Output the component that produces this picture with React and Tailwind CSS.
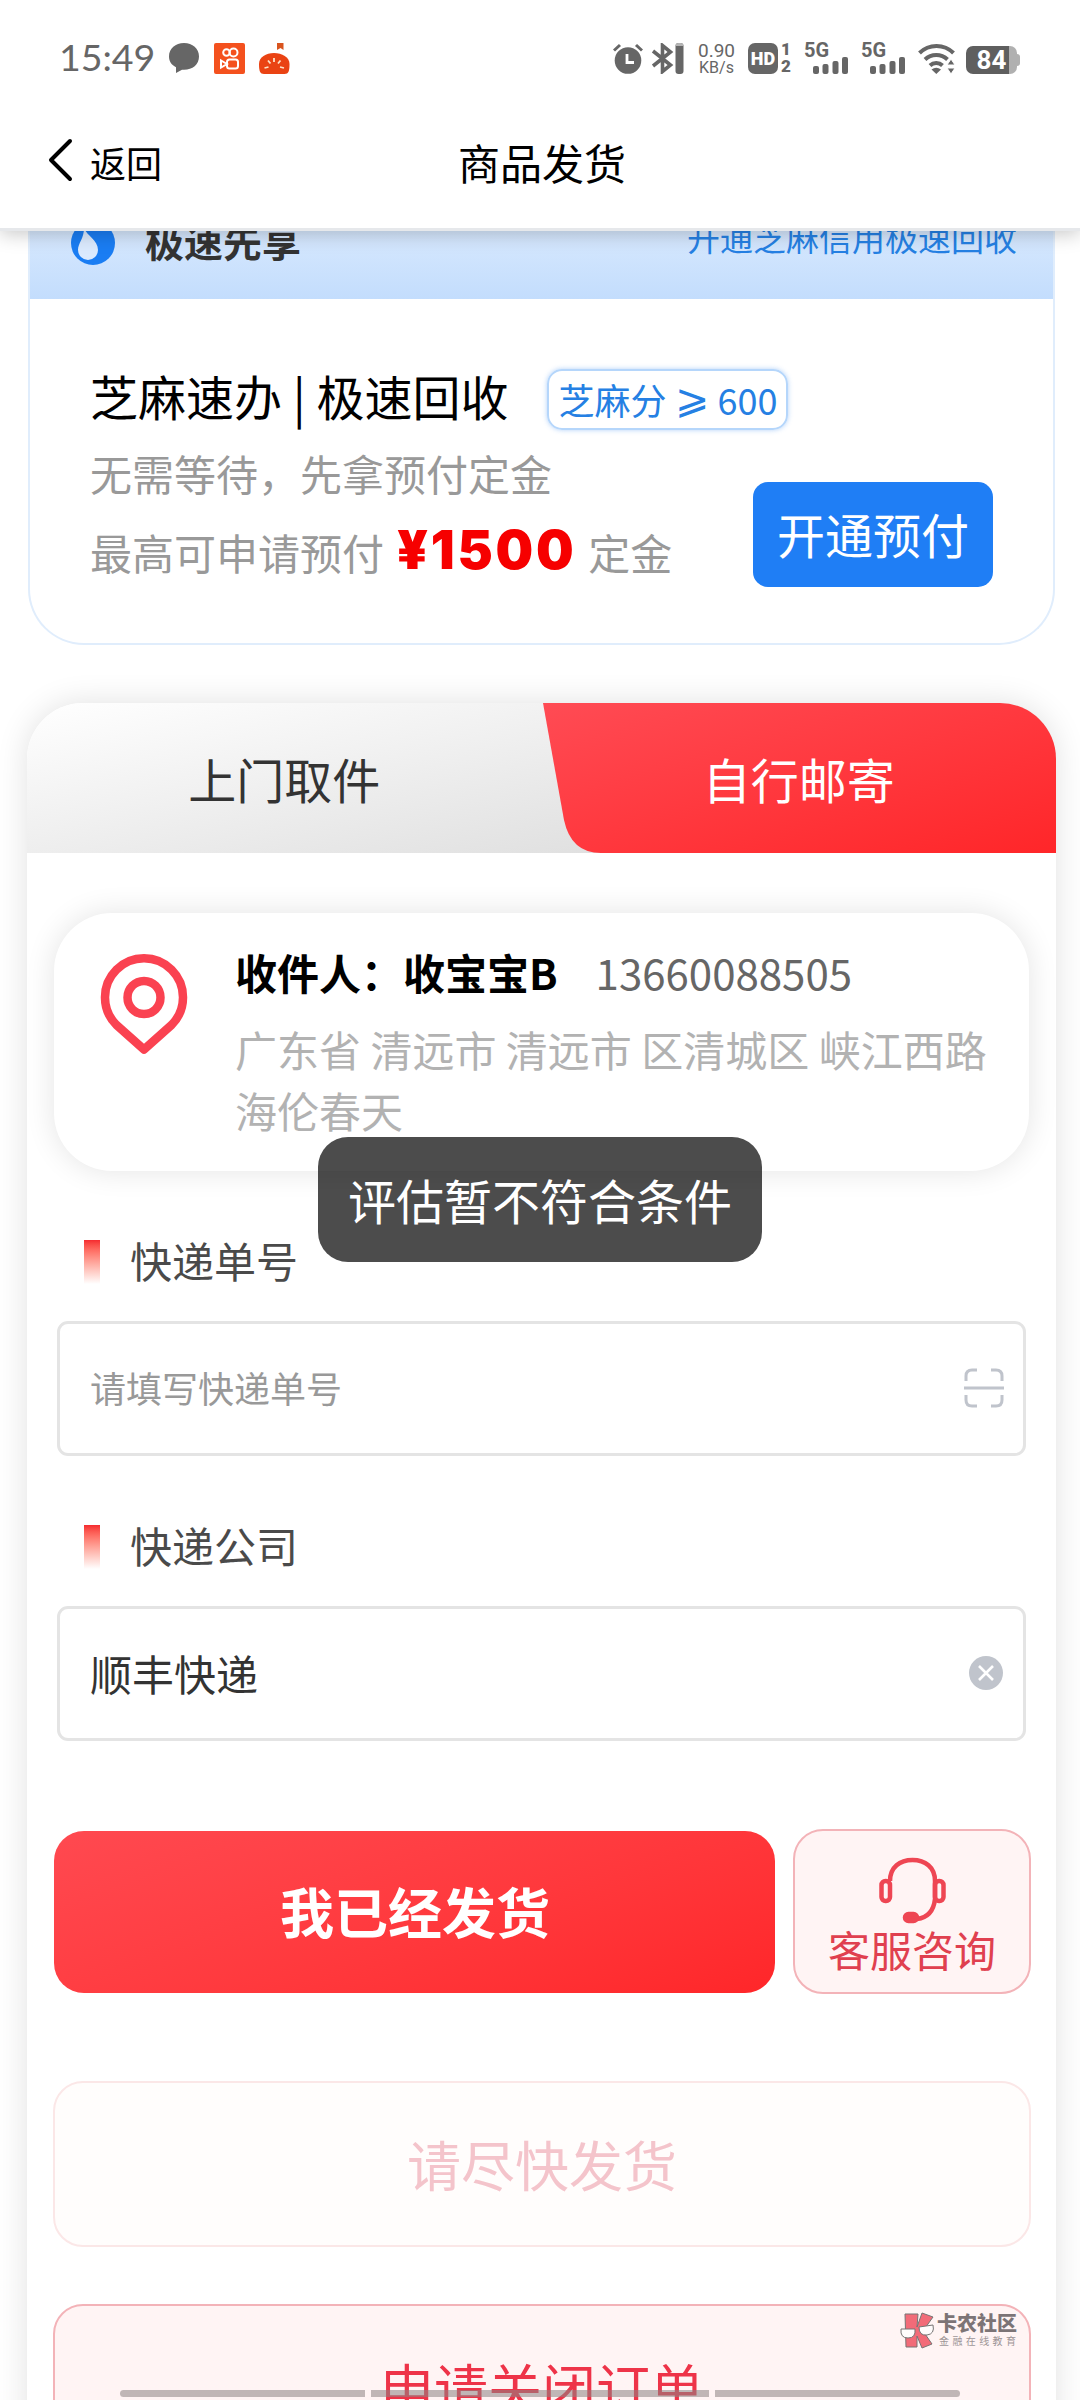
import React, { useState } from 'react';

function StatusBar() {
  return (
    <div className="flex h-[115px] items-start pt-[43px] pr-[60px] pl-[59px] text-[#666]">
      <span className="-mt-[1px] w-[110px] font-['Lato'] text-[37.500px] leading-[30px] whitespace-nowrap">15:49</span>
      <svg className="h-[30px] w-[30px]" viewBox="0 0 30 30">
        <path d="M15 0C6.500 0 0 5.500 0 13.500c0 5 2.700 8.500 7 10.700V30l6-3.200h2c8.500 0 15-5.300 15-13.300S23.500 0 15 0z" fill="currentColor" />
      </svg>
      <svg className="ml-[15px] h-[31px] w-[31px]" viewBox="0 0 31 31">
        <rect width="31" height="31" rx="2" fill="#f4511e" />
        <g fill="none" stroke="#fff" strokeWidth="2">
          <circle cx="12.500" cy="9.500" r="3.300" />
          <circle cx="19.500" cy="9.500" r="4" />
          <rect x="13" y="16.500" width="11" height="9" rx="2.500" />
          <path d="M13 21l-6-3.500v7z" />
        </g>
      </svg>
      <svg className="ml-[14px] h-[31px] w-[31px]" viewBox="0 0 31 31">
        <path d="M18 0h6.500v7l-3-2-3.500 2z" fill="#d9541e" />
        <path d="M0 21C0 14 7 10 15 10s15.500 4 15.500 11c0 7-1 10-5 10H5c-4 0-5-3-5-10z" fill="#ea4313" />
        <path d="M15 15v4M9 17.500l2.500 3M21.500 17.500l-2.500 3M5.500 25l4-1M25 25l-4-1" stroke="#fde3c8" strokeWidth="1.800" />
      </svg>

      <div className="ml-auto flex">
        <svg className="h-[31px] w-[30px]" viewBox="0 0 30 31">
          <circle cx="15" cy="17.500" r="13.300" fill="currentColor" />
          <path d="M1 7.500L7 2M29 7.500L23 2" stroke="currentColor" strokeWidth="3" />
          <path d="M14 11v8.500h7" fill="none" stroke="#fff" strokeWidth="2.800" />
        </svg>
        <svg className="ml-[8px] h-[31px] w-[33px]" viewBox="0 0 33 31">
          <path d="M2 8l17.500 14-8 6.500V2.500l8 6.500L2 23" fill="none" stroke="currentColor" strokeWidth="3.600" />
          <rect x="24.500" y="0" width="8" height="31" rx="3" fill="currentColor" />
          <path d="M24.500 3a3 3 0 0 1 3-3h2a3 3 0 0 1 3 3z" fill="#b5b5b5" />
        </svg>
        <div className="ml-[13px] flex w-[39px] flex-col items-center font-['Roboto'] whitespace-nowrap">
          <span className="text-[19px] leading-[15px]">0.90</span>
          <span className="text-[16px] leading-[19px]">KB/s</span>
        </div>
        <div className="ml-[12px] flex h-[31px] w-[30px] items-center justify-center rounded-[7px] bg-[#666] font-['Roboto'] text-[18px] font-black text-white">HD</div>
        <div className="ml-[2px] flex w-[12px] flex-col items-center font-['Roboto'] text-[17px] leading-[17px] font-black">
          <span className="-mt-[2px]">1</span>
          <span>2</span>
        </div>
        <Signal />
        <Signal />
        <svg className="ml-[12px] h-[31px] w-[37px]" viewBox="0 0 37 31">
          <g fill="none" stroke="currentColor" strokeWidth="4">
            <path d="M1.500 10a24 24 0 0 1 34 0" />
            <path d="M7 16.500a16.500 16.500 0 0 1 22.500 0" />
            <path d="M12 22.500a9 9 0 0 1 12.500 0" />
          </g>
          <path d="M13.500 26.500q4.700-3.500 9.500 0l-4.700 4.500z" fill="currentColor" />
          <path d="M33 16l4 6h-8zM33 31l4-6h-8z" fill="currentColor" stroke="#fff" />
        </svg>
        <div className="mt-[3px] ml-[11px] flex h-[28px] items-center">
          <div className="flex h-[28px] w-[51px] items-center justify-center rounded-[7px] bg-linear-to-r from-[#5f5f5f] from-84% to-[#b0b0b0] to-84% font-['Roboto'] text-[26px] font-bold text-white">84</div>
          <div className="h-[12px] w-[3px] rounded-r bg-[#b0b0b0]" />
        </div>
      </div>
    </div>
  );
}

function Signal() {
  return (
    <div className="ml-[12px] flex h-[31px] w-[45px] flex-col">
      <span className="h-[14px] font-['Roboto'] text-[20px] leading-[15px] font-bold">5G</span>
      <svg className="ml-[9px] h-[17px] w-[36px]" viewBox="0 0 36 17" fill="currentColor">
        <rect x="0" y="9" width="6" height="8" rx="2" />
        <rect x="9.500" y="7" width="6" height="10" rx="2" />
        <rect x="19.500" y="4" width="6" height="13" rx="2" />
        <rect x="29" y="0" width="6" height="17" rx="2" />
      </svg>
    </div>
  );
}

function Header() {
  return (
    <header className="relative z-10 h-[231px] border-b-[3px] border-[#e6e8eb] bg-white shadow-[0_3px_18px_rgba(0,0,0,0.22)]">
      <StatusBar />
      <div className="grid grid-cols-3 items-center pt-[14px]">
        <button className="flex items-center pl-[47px] text-left text-[36px] leading-[60px]">
          <svg className="-mt-[4px] h-[44px] w-[26px]" viewBox="0 0 26 44" fill="none" stroke="#000" strokeWidth="4" strokeLinecap="round" strokeLinejoin="round">
            <path d="M23 3L4 22L23 41" />
          </svg>
          <span className="ml-[17px]">返回</span>
        </button>
        <h1 className="pl-[4px] text-center text-[42px] leading-[66px]">商品发货</h1>
      </div>
    </header>
  );
}

function PrepayCard() {
  return (
    <section className="mr-[25px] ml-[28px] -mt-[44px] h-[458px] overflow-hidden rounded-b-[56px] border-2 border-t-0 border-[#e0edfc]">
      <div className="flex h-[112px] items-center bg-linear-to-b from-[#e3effe] to-[#c3ddfd] pr-[36px] pl-[41px]">
        <svg className="h-[44px] w-[44px]" viewBox="0 0 44 44">
          <circle cx="22" cy="22" r="22" fill="#1a7df3" />
          <path d="M13 7c3 8 14 12 14 22a10 10 0 0 1-20 0c0-7 6-11 6-22z" fill="#dbeafe" />
        </svg>
        <span className="mb-[5px] ml-[30px] text-[39px] leading-none font-bold text-[#333]">极速先享</span>
        <span className="mb-[12px] ml-auto text-[33px] leading-none text-[#2580e3]">开通芝麻信用极速回收</span>
      </div>
      <div className="flex px-[60px] pt-[63px]">
        <div className="flex-1 whitespace-nowrap">
          <div className="flex h-[75px] items-center">
            <h2 className="-mt-[9px] text-[48px] leading-[75px] text-black">芝麻速办 | 极速回收</h2>
            <span className="ml-[39px] flex h-[61px] items-center rounded-[15px] border-2 border-[#b5d6fb] px-[9px] pb-[2px] text-[36px] leading-none text-[#2580e3] shadow-[0_0_5px_rgba(60,140,240,0.4)]">
              芝麻分
              <span className="mr-[8px] mb-[8px] ml-[9px] text-[41px] leading-[36px]">⩾</span>
              600
            </span>
          </div>
          <p className="-mt-[2px] text-[42px] leading-[76px] text-[#999]">无需等待，先拿预付定金</p>
          <p className="flex h-[80px] items-center text-[42px] text-[#999]">
            最高可申请预付
            <b className="mr-[12px] ml-[13px] font-['Inter'] text-[53px] font-black tracking-[2.700px] text-[#f60000]">¥1500</b>
            定金
          </p>
        </div>
        <button className="mt-[120px] -ml-[240px] h-[105px] w-[240px] rounded-[15px] bg-[#1f7ef5] pb-[3px] text-[48px] text-white">开通预付</button>
      </div>
    </section>
  );
}

function Tabs({ active, onChange }) {
  return (
    <div className="relative grid h-[150px] grid-cols-2 overflow-hidden rounded-t-[56px] bg-linear-168 from-white to-[#e0e0e0] to-74%">
      <svg className="absolute top-0 left-[516px] h-[150px] w-[513px]" viewBox="0 0 513 150" preserveAspectRatio="none">
        <defs>
          <linearGradient id="tab" x1="0" y1="0" x2="1" y2="1">
            <stop offset="0" stopColor="#ff4b54" />
            <stop offset="1" stopColor="#ff2629" />
          </linearGradient>
        </defs>
        <path d="M0 0H513V150H58Q28 150 21 117Z" fill="url(#tab)" />
      </svg>
      <button onClick={() => onChange('pickup')} className="relative text-[48px] text-[#333]">上门取件</button>
      <button onClick={() => onChange('mail')} className="relative text-[48px] text-white">自行邮寄</button>
    </div>
  );
}

function AddressCard() {
  return (
    <div className="mx-[27px] mt-[60px] flex h-[258px] rounded-[58px] bg-white pt-[26px] pl-[46px] shadow-[0_0_30px_rgba(0,0,0,0.11)]">
      <svg className="mt-[14px] h-[102px] w-[88px]" viewBox="0 0 88 102" fill="none" stroke="#fa4251" strokeWidth="8.500" strokeLinejoin="round">
        <path d="M44 96.500L16.500 72A39 39 0 1 1 71.500 72Z" />
        <circle cx="44" cy="44.500" r="16.500" />
      </svg>
      <div className="ml-[47px] whitespace-nowrap">
        <div className="flex h-[64px] items-center text-[42px]">
          <b className="text-black">收件人：收宝宝B</b>
          <span className="ml-[38px] text-[#666]">13660088505</span>
        </div>
        <p className="mt-[15px] text-[42px] leading-[61px] text-[#b2b2b2]">
          广东省 清远市 清远市 区清城区 峡江西路
          <br />
          海伦春天
        </p>
      </div>
    </div>
  );
}

function Label({ children }) {
  return (
    <div className="flex h-[60px] items-center pl-[57px] text-[42px] leading-[60px] text-[#4a4a4a]">
      <span className="mr-[30px] h-[44px] w-[16px] bg-linear-to-b from-[#f5292f] to-white" />
      <span className="-mt-[5px]">{children}</span>
    </div>
  );
}

function ScanIcon() {
  return (
    <svg className="-mt-[2px] h-[40px] w-[40px]" viewBox="0 0 40 40" fill="none" stroke="#c0c4cc" strokeWidth="3">
      <path d="M2 13V8q0-6 6-6h5M27 2h5q6 0 6 6v5M38 27v5q0 6-6 6h-5M13 38H8q-6 0-6-6v-5M0 20h40" />
    </svg>
  );
}

function ClearIcon() {
  return (
    <svg className="-mt-[2px] h-[34px] w-[34px]" viewBox="0 0 34 34">
      <circle cx="17" cy="17" r="17" fill="#c0c4cc" />
      <path d="M10 10l14 14M24 10l-14 14" stroke="#fff" strokeWidth="2.600" />
    </svg>
  );
}

function HeadsetIcon() {
  return (
    <svg className="h-[67px] w-[67px]" viewBox="0 0 67 67" fill="none" stroke="#ee4653" strokeWidth="4.500">
      <path d="M11 24C11 10 21 3 33.500 3S56 10 56 24V42Q54 60 38 62" />
      <rect x="2.500" y="24" width="8.500" height="20" rx="4" />
      <rect x="56" y="24" width="8.500" height="20" rx="4" />
      <rect x="26" y="57" width="12" height="7" rx="3.500" fill="#ee4653" />
    </svg>
  );
}

function Watermark() {
  return (
    <div className="absolute top-[2312px] left-[900px] z-20 flex opacity-80">
      <svg className="h-[37px] w-[35px]" viewBox="0 0 35 37" stroke="#555" strokeWidth="1">
        <path d="M5 2h13l-1 13 5-14 11 4-10 14 9 13-10 4-5-12v11H6z" fill="#f0495a" />
        <path d="M1 17h14q1 9-7 9T1 17z" fill="#fff" />
        <path d="M19 15l14-2q2 9-6 10t-8-8z" fill="#fff" />
      </svg>
      <div className="ml-[2px] flex flex-col whitespace-nowrap">
        <span className="h-[22px] text-[20px] leading-[22px] font-black text-[#5c5557]">卡农社区</span>
        <span className="ml-[2px] text-[10px] leading-[13px] tracking-[3.400px] text-[#857c7e]">金融在线教育</span>
      </div>
    </div>
  );
}

export default function App() {
  const [tab, setTab] = useState('mail');

  return (
    <div className="relative h-[2400px] w-[1080px] overflow-hidden bg-white font-['Noto_Sans_CJK_SC',sans-serif] text-black">
      <Header />
      <PrepayCard />

      <main className="mr-[24px] ml-[27px] mt-[58px] h-[1900px] rounded-t-[56px] bg-white shadow-[0_0_32px_rgba(0,0,0,0.12)]">
        <Tabs active={tab} onChange={setTab} />
        <AddressCard />

        <div className="mt-[61px]">
          <Label>快递单号</Label>
        </div>
        <div className="mr-[30px] ml-[30px] mt-[29px] flex h-[135px] items-center justify-between rounded-[11px] border-[3px] border-[#e4e4e4] pr-[19px] pl-[30px] text-[36px] text-[#999]">
          <span className="-mt-[3px]">请填写快递单号</span>
          <ScanIcon />
        </div>

        <div className="mt-[61px]">
          <Label>快递公司</Label>
        </div>
        <div className="mr-[30px] ml-[30px] mt-[29px] flex h-[135px] items-center justify-between rounded-[11px] border-[3px] border-[#e4e4e4] pr-[20px] pl-[30px] text-[42px] text-[#333]">
          <span className="-mt-[2px]">顺丰快递</span>
          <ClearIcon />
        </div>

        <div className="mt-[88px] flex gap-[18px] pr-[25px] pl-[27px]">
          <button className="mt-[2px] h-[162px] flex-1 rounded-[30px] bg-linear-160 from-[#ff4950] to-[#ff2629] pb-[3px] pl-[1px] text-[54px] font-bold text-white">
            我已经发货
          </button>
          <button className="flex h-[165px] w-[238px] flex-col items-center rounded-[30px] border-2 border-[#f3b3b8] bg-[#fff4f4] pt-[26px] text-[42px] leading-[60px] text-[#e0404f]">
            <HeadsetIcon />
            <span className="-mt-[5px]">客服咨询</span>
          </button>
        </div>

        <button disabled className="mx-[26px] mt-[87px] block h-[166px] w-[978px] rounded-[30px] border-2 border-[#fbe7e7] bg-[#fffdfc] pb-[1px] text-[54px] text-[#f4c4cb]">
          请尽快发货
        </button>
        <button className="mx-[26px] mt-[57px] block h-[166px] w-[978px] rounded-[30px] border-2 border-[#f3b3b8] bg-[#fff4f4] pb-[1px] text-[54px] text-[#ee3348]">
          申请关闭订单
        </button>
      </main>

      {/* toast */}
      <div className="absolute top-[1137px] left-[318px] flex h-[125px] w-[444px] items-center justify-center rounded-[30px] bg-black/70 pb-[2px] text-[48px] text-white">
        评估暂不符合条件
      </div>

      <Watermark />

      {/* system gesture bar */}
      <div className="absolute top-[2390px] left-[120px] flex h-[7px] w-[840px] gap-[6px]">
        <span className="w-[245px] rounded-l-full bg-[#8c8383]/55" />
        <span className="flex-1 bg-[#8c8383]/55" />
        <span className="w-[245px] rounded-r-full bg-[#8c8383]/55" />
      </div>
    </div>
  );
}
